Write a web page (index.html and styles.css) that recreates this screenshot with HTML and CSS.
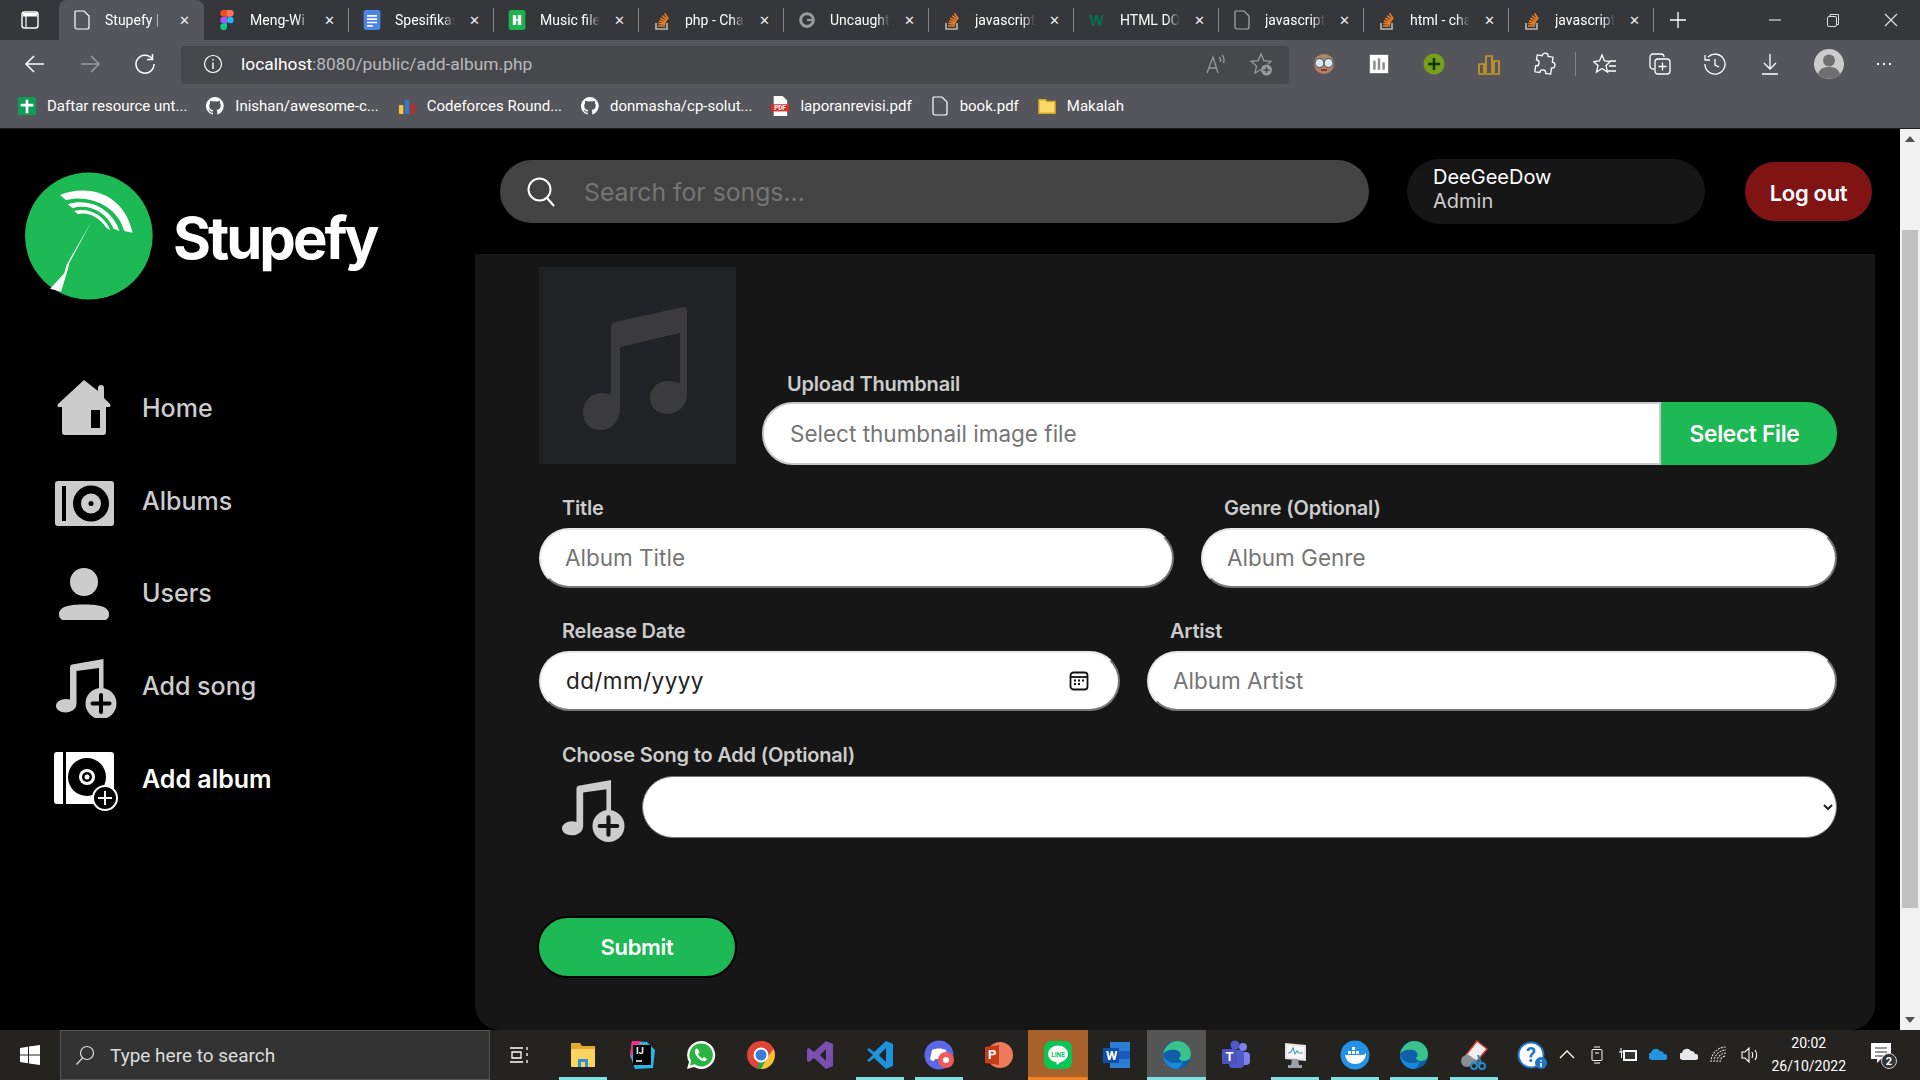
FILE: index.html
```html
<!DOCTYPE html>
<html lang="en">
<head>
<meta charset="utf-8">
<title>Stupefy | Add album</title>
<link rel="stylesheet" href="styles.css">
</head>
<body>
<svg class="defs" width="0" height="0" aria-hidden="true">
  <symbol id="doc" viewBox="0 0 16 20"><path d="M2 1h8l5 5v11a2 2 0 0 1-2 2H3a2 2 0 0 1-2-2V2a1 1 0 0 1 1-1z" fill="none" stroke="currentColor" stroke-width="1.2"/></symbol>
  <symbol id="so" viewBox="0 0 16 20"><path d="M2 13v6h11v-6" fill="none" stroke="#bcbbbb" stroke-width="1.6"/><path d="M4 16h7M4.3 13.5l7 .6M5 11l6.7 1.6M6.3 8.3l6.2 3M8.200 5.600l5.200 4.400M10.600 3.400l3.600 5.600" stroke="#f48024" stroke-width="1.6"/></symbol>
  <symbol id="gh" viewBox="0 0 16 16"><path fill="#fff" d="M8 0a8 8 0 0 0-2.500 15.600c.4.100.5-.2.500-.4v-1.400c-2.200.5-2.700-1-2.700-1-.4-.9-.9-1.200-.9-1.200-.7-.5.100-.5.100-.5.800.100 1.200.8 1.200.8.700 1.200 1.900.9 2.300.7.100-.5.300-.9.500-1.100-1.800-.2-3.600-.9-3.600-4 0-.9.300-1.600.8-2.100-.1-.2-.4-1 .1-2.100 0 0 .7-.2 2.200.8a7.600 7.600 0 0 1 4 0c1.500-1 2.200-.8 2.200-.8.400 1.100.2 1.900.1 2.100.5.600.8 1.300.8 2.100 0 3.100-1.900 3.700-3.700 3.900.3.300.6.800.6 1.500v2.200c0 .2.100.5.500.4A8 8 0 0 0 8 0z"/></symbol>
  <symbol id="note-plus" viewBox="0 0 61 59"><path fill="currentColor" d="M16 5.500 47.500 0v29.500a20 20 0 0 0-4.500 1.700V9L20.500 12v32.500c0 5.500-5 9-11 9C4 53.500 0 50.500 0 47c0-4 4.500-7 10-7 1.200 0 2.500.2 4 .6V8a3 3 0 0 1 2-2.500z"/><circle cx="45" cy="44.500" r="15.500" fill="currentColor"/><path d="M45 36v17M36.500 44.500h17" stroke="var(--cut)" stroke-width="4" stroke-linecap="round"/></symbol>
  <symbol id="edge" viewBox="0 0 30 30">
    <circle cx="15" cy="15" r="14" fill="#0f5ea8"/>
    <path d="M1 14C3 5 10 1 15 1c8 0 14 6 14 13 0 5-3 7-7 7-3 0-5-1-5-3 3-2 2-7-3-8-6-1-11 1-13 4z" fill="#38c28e"/>
    <path d="M15 29C8 29 1 23 1 14c1 5 6 9 11 9 4 0 7-1 9-2-1 4-4 8-6 8z" fill="#1888d8"/>
  </symbol>
</svg>

<header class="chrome">
  <div class="tabstrip">
    <div class="strip-lead"><svg class="ic20" viewBox="0 0 20 20"><rect x="2" y="2" width="16" height="16" rx="2.500" fill="none" stroke="#fff" stroke-width="1.400"/><rect x="3" y="3" width="14" height="3.500" fill="#fff"/><path d="M6 6v11" stroke="#fff" stroke-width="1.200"/></svg></div>
    <div class="tab active"><svg class="fav" style="color:#fff"><use href="#doc"/></svg><span class="tab-title">Stupefy | </span><span class="tab-x">✕</span></div>
    <div class="tab"><svg class="fav" viewBox="0 0 16 24"><path fill="#f24e1e" d="M4 0h4v8H4a4 4 0 0 1 0-8z"/><path fill="#ff7262" d="M8 0h4a4 4 0 0 1 0 8H8z"/><path fill="#a259ff" d="M4 8h4v8H4a4 4 0 0 1 0-8z"/><circle cx="12" cy="12" r="4" fill="#1abcfe"/><path fill="#0acf83" d="M4 16h4v4a4 4 0 1 1-4-4z"/></svg><span class="tab-title">Meng-Wi</span><span class="tab-x">✕</span></div>
    <div class="tab"><svg class="fav" viewBox="0 0 20 24"><rect width="20" height="24" rx="3" fill="#4a86e8"/><path d="M4 7h12M4 11h12M4 15h12M4 19h7" stroke="#fff" stroke-width="2"/></svg><span class="tab-title">Spesifikas</span><span class="tab-x">✕</span></div>
    <div class="tab"><svg class="fav" viewBox="0 0 20 24"><rect width="20" height="24" rx="3" fill="#1db24b"/><path d="M5 6h4v5h2V6h4v12h-4v-5H9v5H5z" fill="#fff"/></svg><span class="tab-title">Music file</span><span class="tab-x">✕</span></div>
    <div class="tab"><svg class="fav"><use href="#so"/></svg><span class="tab-title">php - Cha</span><span class="tab-x">✕</span></div>
    <div class="tab"><svg class="fav" viewBox="0 0 24 24"><circle cx="12" cy="12" r="8.500" fill="none" stroke="#9a9a9a" stroke-width="4"/><path d="M12 10.500h9v3h-9z" fill="#9a9a9a"/></svg><span class="tab-title">Uncaught</span><span class="tab-x">✕</span></div>
    <div class="tab"><svg class="fav"><use href="#so"/></svg><span class="tab-title">javascript</span><span class="tab-x">✕</span></div>
    <div class="tab"><svg class="fav" viewBox="0 0 24 24"><path fill="#04714f" d="M1 5h4l2 11 3-11h3l3 11 2-11h3l-4 15h-3l-3-10-3 10H6z"/></svg><span class="tab-title">HTML DO</span><span class="tab-x">✕</span></div>
    <div class="tab"><svg class="fav" style="color:#aaa"><use href="#doc"/></svg><span class="tab-title">javascript</span><span class="tab-x">✕</span></div>
    <div class="tab"><svg class="fav"><use href="#so"/></svg><span class="tab-title">html - cha</span><span class="tab-x">✕</span></div>
    <div class="tab"><svg class="fav"><use href="#so"/></svg><span class="tab-title">javascript</span><span class="tab-x">✕</span></div>
    <div class="tab-new"><svg class="ic20" viewBox="0 0 20 20"><path d="M10 2v16M2 10h16" stroke="#fff" stroke-width="1.300"/></svg></div>
    <div class="win-controls">
      <svg class="ic14" viewBox="0 0 14 14"><path d="M1 7h12" stroke="#ddd" stroke-width="1.200"/></svg>
      <svg class="ic14" viewBox="0 0 14 14"><rect x="1.500" y="3.500" width="9" height="10" rx="1.500" fill="none" stroke="#ddd"/><path d="M4 3.500V1.500h8.500v10h-2" fill="none" stroke="#ddd"/></svg>
      <svg class="ic14" viewBox="0 0 14 14"><path d="M1 1l12 12M13 1 1 13" stroke="#ddd" stroke-width="1.200"/></svg>
    </div>
  </div>

  <div class="toolbar">
    <div class="nav-btns">
      <svg class="ic24" viewBox="0 0 24 24"><path d="M21 12H3M11 4l-8 8 8 8" fill="none" stroke="#fff" stroke-width="1.500"/></svg>
      <svg class="ic24" viewBox="0 0 24 24"><path d="M3 12h18M13 4l8 8-8 8" fill="none" stroke="#98999b" stroke-width="1.500"/></svg>
      <svg class="ic24" viewBox="0 0 24 24"><path d="M19 6.500A9 9 0 1 0 21 12" fill="none" stroke="#fff" stroke-width="1.500"/><path d="M19.500 2v5.500H14" fill="none" stroke="#fff" stroke-width="1.500"/></svg>
    </div>
    <div class="address">
      <svg class="ic20" viewBox="0 0 20 20"><circle cx="10" cy="10" r="8.500" fill="none" stroke="#fff" stroke-width="1.200"/><path d="M10 8.500V15M10 5v1.600" stroke="#fff" stroke-width="1.400"/></svg>
      <span class="url"><span class="url-host">localhost</span>:8080/public/add-album.php</span>
      <span class="addr-spacer"></span>
      <svg class="ic24" viewBox="0 0 24 24"><path d="M3 21 9 5l5 16M5 16h8M15 5c1.500 1 2 3 1.500 5M18 3c2 2 2.500 5 1.500 8" fill="none" stroke="#98999b" stroke-width="1.300"/></svg>
      <svg class="ic24 addr-star" viewBox="0 0 24 24"><path d="M12 17.500 6 21l1.500-7L2 9.300l7.200-.7L12 2l2.800 6.600 7.200.7-3 3" fill="none" stroke="#98999b" stroke-width="1.300"/><circle cx="17.500" cy="18" r="5.500" fill="#98999b"/><path d="M17.500 15v6M14.500 18h6" stroke="#47484c" stroke-width="1.300"/></svg>
    </div>
    <div class="ext-btns">
      <span class="slot"><svg class="ic24" viewBox="0 0 24 24"><circle cx="12" cy="12" r="10" fill="#b5806a"/><path d="M3 7c4-6 14-6 18 0l-2 3H5z" fill="#a88a6a"/><circle cx="7.500" cy="11" r="4.500" fill="#d8e8ee" stroke="#445" stroke-width="1"/><circle cx="16.500" cy="11" r="4.500" fill="#d8e8ee" stroke="#445" stroke-width="1"/><path d="M9 18h6" stroke="#83392a" stroke-width="2"/></svg></span>
      <span class="slot"><svg class="ic20" viewBox="0 0 24 24"><rect x="1" y="1" width="22" height="22" fill="#fff"/><path d="M5 8h3v11H5zM10.500 5h3v14h-3zM16 10h3v9h-3z" fill="#8d8d8d"/></svg></span>
      <span class="slot"><svg class="ic24" viewBox="0 0 24 24"><circle cx="12" cy="12" r="10.500" fill="#76a016"/><path d="M12 6v12M6 12h12" stroke="#16330e" stroke-width="2.600"/></svg></span>
      <span class="slot"><svg class="ic24" viewBox="0 0 24 24"><path d="M2 21V12h5v9M9 21V4h6v17M17 21V9h5v12M1 22h22" fill="none" stroke="#c89a22" stroke-width="1.700"/></svg></span>
      <span class="slot"><svg class="ic24" viewBox="0 0 24 24"><path d="M9 4a3 3 0 0 1 6 0h5v5a3 3 0 0 1 0 6v6h-5a3 3 0 0 0-6 0H4v-6a3 3 0 0 0 0-6V4z" fill="none" stroke="#fff" stroke-width="1.300" transform="rotate(8 12 12)"/></svg></span>
      <span class="tool-sep"></span>
      <span class="slot"><svg class="ic24" viewBox="0 0 24 24"><path d="M9 3l2.500 6 6 .5-4.500 4 1.500 6.500L9 16.500 3.500 20 5 13.500.5 9.500l6-.5z" fill="none" stroke="#fff" stroke-width="1.300"/><path d="M17 9h6M16 14h7M15 19h8" stroke="#fff" stroke-width="1.300"/></svg></span>
      <span class="slot"><svg class="ic24" viewBox="0 0 24 24"><path d="M6 17H5a3 3 0 0 1-3-3V5a3 3 0 0 1 3-3h8a3 3 0 0 1 3 3" fill="none" stroke="#fff" stroke-width="1.300"/><rect x="7" y="7" width="15" height="15" rx="3" fill="none" stroke="#fff" stroke-width="1.300"/><path d="M14.500 10.500v8M10.500 14.500h8" stroke="#fff" stroke-width="1.300"/></svg></span>
      <span class="slot"><svg class="ic24" viewBox="0 0 24 24"><path d="M5 5a10 10 0 1 1-3 7M2 3v5h5M12 7v6l4 2" fill="none" stroke="#fff" stroke-width="1.300"/></svg></span>
      <span class="slot"><svg class="ic24" viewBox="0 0 24 24"><path d="M12 2v15M6 11l6 6 6-6M4 22h16" fill="none" stroke="#fff" stroke-width="1.300"/></svg></span>
      <span class="slot slot-avatar"><svg class="avatar" viewBox="0 0 30 30"><circle cx="15" cy="15" r="15" fill="#ccc"/><circle cx="15" cy="11.500" r="6" fill="#6f6f6f"/><path d="M4 25c2-6 6-7 11-7s9 1 11 7a15 15 0 0 1-22 0z" fill="#6f6f6f"/></svg></span>
      <span class="slot"><svg class="ic24" viewBox="0 0 24 24"><path d="M5 12h2M11 12h2M17 12h2" stroke="#fff" stroke-width="2"/></svg></span>
    </div>
  </div>

  <div class="bookmarks">
    <span class="bm"><svg class="fav" viewBox="0 0 20 20"><rect width="20" height="20" rx="2" fill="#0f9d58"/><path d="M8.500 3h3v4.500H17v3h-5.500V18h-3v-7.500H3v-3h5.500z" fill="#fff"/></svg>Daftar resource unt...</span>
    <span class="bm"><svg class="fav"><use href="#gh"/></svg>Inishan/awesome-c...</span>
    <span class="bm"><svg class="fav" viewBox="0 0 20 20"><rect x="1" y="9" width="5" height="10" rx="1" fill="#f6c43d"/><rect x="7.500" y="3" width="5" height="16" rx="1" fill="#3b78c2"/><rect x="14" y="7" width="5" height="12" rx="1" fill="#b5302a"/></svg>Codeforces Round...</span>
    <span class="bm"><svg class="fav"><use href="#gh"/></svg>donmasha/cp-solut...</span>
    <span class="bm"><svg class="fav" viewBox="0 0 20 22"><path d="M3 0h10l5 5v17H3z" fill="#fff"/><rect x="0" y="9" width="20" height="8" fill="#d8312b"/><text x="10" y="15.500" class="pdf-tag">PDF</text></svg>laporanrevisi.pdf</span>
    <span class="bm"><svg class="fav" style="color:#fff"><use href="#doc"/></svg>book.pdf</span>
    <span class="bm"><svg class="fav" viewBox="0 0 20 20"><path d="M1 3h7l2 2h9v13H1z" fill="#fbd968" stroke="#d8a723" stroke-width="1.500"/></svg>Makalah</span>
  </div>
</header>

<div class="page">
  <aside class="sidebar">
    <div class="brand">
      <svg class="logo" viewBox="75 130 383 380">
        <ellipse cx="266" cy="320" rx="191" ry="190" fill="#1db954"/>
        <path fill="#fff" d="M180 197C255 165 370 185 397 310L372 305C350 225 260 195 198 213Z"/>
        <path fill="#fff" d="M203 225C270 205 335 240 358 305L340 298C318 245 262 222 218 237Z"/>
        <path fill="#fff" d="M222 245C265 235 310 255 331 303L318 295C295 262 262 247 234 255Z"/>
        <path fill="#fff" d="M275 275 207 402 203 420 183 487 150 478 192 432 200 405Z"/>
      </svg>
      <span class="brand-name">Stupefy</span>
    </div>
    <nav class="nav">
      <a class="nav-item">
        <span class="nav-icon"><svg class="i-home" viewBox="0 0 54 55"><path fill="#ccc" d="M27 0 41 11V8a3 3 0 0 1 6 0v10l6 6c1 1 .5 3-1 3h-3v25a3 3 0 0 1-3 3H8a3 3 0 0 1-3-3V27H2c-1.500 0-2-2-1-3z"/><rect x="34" y="30" width="9" height="18" fill="#000"/></svg></span>
        <span class="nav-text">Home</span>
      </a>
      <a class="nav-item">
        <span class="nav-icon"><svg class="i-album" viewBox="0 0 59 45"><rect width="59" height="45" rx="3" fill="#ccc"/><rect x="7" y="5" width="4" height="35" fill="#000"/><circle cx="36" cy="22.500" r="18" fill="#000"/><circle cx="36" cy="22.500" r="10" fill="#ccc"/><circle cx="36" cy="22.500" r="2.500" fill="#000"/></svg></span>
        <span class="nav-text">Albums</span>
      </a>
      <a class="nav-item">
        <span class="nav-icon"><svg class="i-user" viewBox="0 0 50 52"><circle cx="25" cy="14" r="14" fill="#ccc"/><path fill="#ccc" d="M0 46c0-8 12-9.500 25-9.500S50 38 50 46c0 4-2 6-5 6H5c-3 0-5-2-5-6z"/></svg></span>
        <span class="nav-text">Users</span>
      </a>
      <a class="nav-item">
        <span class="nav-icon"><svg class="i-song"><use href="#note-plus"/></svg></span>
        <span class="nav-text">Add song</span>
      </a>
      <a class="nav-item current">
        <span class="nav-icon"><svg class="i-addalbum" viewBox="0 0 64 59"><path fill="#fff" d="M3 0h6v52H3a3 3 0 0 1-3-3V3a3 3 0 0 1 3-3zM12 0h45a3 3 0 0 1 3 3v49H12z"/><circle cx="33" cy="25" r="19" fill="#000"/><circle cx="33" cy="25" r="8" fill="#fff"/><circle cx="33" cy="25" r="5" fill="#000"/><circle cx="33" cy="25" r="2.500" fill="#fff"/><circle cx="51" cy="46" r="12" fill="#000" stroke="#fff" stroke-width="2"/><path d="M51 39v14M44 46h14" stroke="#fff" stroke-width="2"/></svg></span>
        <span class="nav-text">Add album</span>
      </a>
    </nav>
  </aside>

  <main class="content">
    <div class="topbar">
      <label class="search">
        <svg class="search-ic" viewBox="0 0 30 32"><circle cx="13.500" cy="13.500" r="11" fill="none" stroke="#fff" stroke-width="2"/><path d="M21 22l7 8" stroke="#fff" stroke-width="2"/></svg>
        <input class="search-input" type="text" placeholder="Search for songs...">
      </label>
      <div class="user-pill">
        <span class="user-name">DeeGeeDow</span>
        <span class="user-role">Admin</span>
      </div>
      <button class="logout" type="button">Log out</button>
    </div>

    <form class="panel">
      <div class="row-thumb">
        <div class="thumb">
          <svg class="thumb-note" viewBox="0 0 197 197"><path fill="#3b3b3d" d="M72 60q0-4 4-5l68-15q4-.5 4 3.500V128c0 10-9 19-19 19s-18-6-18-16 8-17 18-17c3 0 6 .5 12 2.500V66L81 80v62c0 11-8 21-19 21s-18-7-18-18 9-19 19-19c3 0 6 .5 9 1.500z"/></svg>
        </div>
        <div class="upload">
          <span class="label label-upload">Upload Thumbnail</span>
          <div class="file-group">
            <input class="field file-field" type="text" placeholder="Select thumbnail image file">
            <button class="file-btn" type="button">Select File</button>
          </div>
        </div>
      </div>

      <div class="row row-half">
        <div class="group">
          <span class="label">Title</span>
          <input class="field" type="text" placeholder="Album Title">
        </div>
        <div class="group">
          <span class="label">Genre (Optional)</span>
          <input class="field" type="text" placeholder="Album Genre">
        </div>
      </div>

      <div class="row row-date">
        <div class="group">
          <span class="label">Release Date</span>
          <div class="date-field">
            <input class="date-input" type="text" value="dd/mm/yyyy">
            <svg class="cal" viewBox="0 0 20 20"><rect x="1.500" y="1.500" width="17" height="17" rx="3" fill="none" stroke="#111" stroke-width="1.800"/><path d="M1.500 6h17" stroke="#111" stroke-width="1.800"/><path d="M5 9.500h2M9 9.500h2M13 9.500h2M5 13h2M9 13h2" stroke="#111" stroke-width="1.800"/></svg>
          </div>
        </div>
        <div class="group">
          <span class="label">Artist</span>
          <input class="field" type="text" placeholder="Album Artist">
        </div>
      </div>

      <div class="row-song">
        <span class="label">Choose Song to Add (Optional)</span>
        <div class="song-line">
          <svg class="song-ic"><use href="#note-plus"/></svg>
          <select class="song-select"><option></option></select>
        </div>
      </div>

      <button class="submit" type="button">Submit</button>
    </form>
  </main>

  <div class="scrollbar">
    <span class="sb-btn"><svg class="sb-arrow" viewBox="0 0 10 6"><path d="M5 0l5 6H0z" fill="#505050"/></svg></span>
    <span class="sb-gap"></span>
    <span class="sb-thumb"></span>
    <span class="sb-rest"></span>
    <span class="sb-btn"><svg class="sb-arrow" viewBox="0 0 10 6"><path d="M0 0h10L5 6z" fill="#505050"/></svg></span>
  </div>
</div>

<footer class="taskbar">
  <span class="start"><svg class="ic20" viewBox="0 0 20 20"><path fill="#fff" d="M0 3l8-1.200V9.500H0zM9 1.600 20 0v9.500H9zM0 10.500h8v7.700L0 17zM9 10.500h11V20L9 18.400z"/></svg></span>
  <div class="task-search">
    <svg class="ic20" viewBox="0 0 20 20"><circle cx="12" cy="8" r="6.500" fill="none" stroke="#ddd" stroke-width="1.200"/><path d="M7.500 13 1.500 19.500" stroke="#ddd" stroke-width="1.200"/></svg>
    <span>Type here to search</span>
  </div>
  <div class="task-icons">
    <span class="ti ti-first"><svg class="ic20" viewBox="0 0 20 20"><path d="M1 3h13M1 17h13M3 7h9v6H3zM18 2v3M18 8v3M18 15v3" fill="none" stroke="#fff" stroke-width="1.300"/></svg></span>
    <span class="ti on"><svg class="ic30" viewBox="0 0 30 30"><path d="M3 3h9l2 3h13v6H3z" fill="#e3a92a"/><rect x="3" y="9" width="24" height="18" rx="1" fill="#fbd35f"/><path d="M10 27v-8h10v8h-3v-5h-4v5z" fill="#2f8fdc"/></svg></span>
    <span class="ti"><svg class="ic30" viewBox="0 0 30 30"><path d="M5 1 20 2l8 8-2 18-18 1-5-14z" fill="#28b8e8"/><path d="M5 1 14 1 3 18z" fill="#fb2a8a"/><path d="M14 3 24 8l-6 6z" fill="#f97a1f"/><rect x="6" y="5" width="18" height="20" fill="#000"/><text x="9" y="14" class="ij-tag">IJ</text><path d="M9 21h6" stroke="#fff" stroke-width="1.500"/></svg></span>
    <span class="ti"><svg class="ic30" viewBox="0 0 30 30"><path d="M15 1a14 14 0 0 0-12 21L1 29l7-2A14 14 0 1 0 15 1z" fill="#fff"/><path d="M15 3.500a11.500 11.500 0 0 0-9.800 17.600L4 25.500l4.600-1.200A11.500 11.500 0 1 0 15 3.500z" fill="#29b43f"/><path d="M10.500 8.500c-1 .6-2 2-1.500 4 .8 3.500 4.500 7.500 8 8.500 2 .5 3.500-.5 4-2l-3-2-1.500 1.500c-2-.8-3.500-2.500-4.500-4.500l1.500-1.500-1.500-3.500z" fill="#fff"/></svg></span>
    <span class="ti"><svg class="ic30" viewBox="0 0 30 30"><circle cx="15" cy="15" r="14" fill="#de4437"/><path d="M15 15 27 22a14 14 0 0 1-16 6.500z" fill="#2ba24c"/><path d="M15 1a14 14 0 0 1 12.500 8H15z" fill="#de4437"/><path d="M27.500 9A14 14 0 0 1 15 29l6-11z" fill="#fbc02d"/><circle cx="15" cy="15" r="6.500" fill="#3b7bdb" stroke="#fff" stroke-width="2"/></svg></span>
    <span class="ti"><svg class="ic30" viewBox="0 0 30 30"><path d="M21 1l7 3v22l-7 3L9 18l-5 4-2-1V9l2-1 5 4zM21 9l-6 6 6 6z" fill="#7a4fb0"/></svg></span>
    <span class="ti on"><svg class="ic30" viewBox="0 0 30 30"><path d="M21 1l7 3v22l-7 3L9 18l-5 4-2-1.500L8 15 2 9.500 4 8l5 4zM21 8l-7 7 7 7z" fill="#1e92dc"/></svg></span>
    <span class="ti on"><svg class="ic30" viewBox="0 0 30 30"><circle cx="15" cy="15" r="14.500" fill="#5b68e8"/><path d="M8 10c4-2 10-2 14 0l2 9c-1 1.500-3 2-4 2l-1-2H11l-1 2c-1 0-3-.5-4-2z" fill="#fff"/><circle cx="22" cy="20" r="8" fill="#ef5a5a"/><circle cx="22" cy="20" r="3" fill="#fff"/></svg></span>
    <span class="ti"><svg class="ic30" viewBox="0 0 30 30"><circle cx="17" cy="15" r="13" fill="#ee7a5c"/><path d="M2 7l14-2v20L2 23z" fill="#c43e1c"/><text x="5" y="19" class="office-tag">P</text></svg></span>
    <span class="ti ti-line"><svg class="ic30" viewBox="0 0 30 30"><rect x="1" y="1" width="28" height="28" rx="7" fill="#06c755"/><ellipse cx="15" cy="14" rx="10" ry="8.500" fill="#fff"/><text x="15" y="16.500" class="line-tag">LINE</text><path d="M13 21l1 4 5-4z" fill="#fff"/></svg></span>
    <span class="ti"><svg class="ic30" viewBox="0 0 30 30"><path d="M8 2h20v26H8z" fill="#2b7cd3"/><path d="M8 11h20v8H8z" fill="#185abd"/><path d="M1 8h16v15H1z" fill="#124fa8"/><text x="4" y="19.500" class="office-tag">W</text></svg></span>
    <span class="ti ti-active"><svg class="ic30"><use href="#edge"/></svg></span>
    <span class="ti"><svg class="ic30" viewBox="0 0 30 30"><circle cx="22" cy="7" r="4" fill="#7b83eb"/><rect x="18" y="12" width="11" height="13" rx="4" fill="#7b83eb"/><circle cx="14" cy="5" r="4.500" fill="#5059c9"/><rect x="8" y="10" width="15" height="18" rx="4" fill="#5059c9"/><rect x="1" y="9" width="15" height="15" rx="1.500" fill="#4b53bc"/><text x="4.500" y="21" class="office-tag">T</text></svg></span>
    <span class="ti on"><svg class="ic30" viewBox="0 0 30 30"><path d="M5 3l21 2v16L5 19z" fill="#e4e4e4"/><path d="M7 5l17 2v12L7 17z" fill="#f8f8f8"/><path d="M8 13l3-1 2-4 2 6 2-3 2 2h4" fill="none" stroke="#4a9cc9" stroke-width="1.200"/><path d="M12 19h6l1 6h-8zM8 25h14v3H8z" fill="#9aa0a6"/></svg></span>
    <span class="ti on"><svg class="ic30" viewBox="0 0 30 30"><circle cx="15" cy="15" r="14.500" fill="#2391e6"/><path d="M5 15h17c2 0 3-1 4-2 0 6-4 11-11 11-6 0-9-4-10-9z" fill="#fff"/><path d="M8 11h3v3H8zM12 11h3v3h-3zM16 11h3v3h-3zM12 7h3v3h-3z" fill="#fff"/></svg></span>
    <span class="ti on"><svg class="ic30"><use href="#edge"/></svg></span>
    <span class="ti on"><svg class="ic30" viewBox="0 0 30 30"><path d="M18 1 28 9 17 22 7 15z" fill="#eee" stroke="#dc3c3c" stroke-width="1.500"/><path d="M7 15l10 7" stroke="#999" stroke-width="3"/><circle cx="8" cy="21" r="6" fill="#8a8f94"/><path d="M19 15l3 8M15 20l7 4" stroke="#2a8ac6" stroke-width="2"/><circle cx="23" cy="26" r="3" fill="none" stroke="#2a8ac6" stroke-width="2"/><circle cx="15" cy="26" r="3" fill="none" stroke="#2a8ac6" stroke-width="2"/></svg></span>
  </div>
  <div class="tray">
    <span class="tr tr-help"><svg class="ic30" viewBox="0 0 30 30"><circle cx="14" cy="15" r="12.500" fill="#fff" stroke="#1f76c8" stroke-width="2"/><text x="14" y="22" class="help-tag">?</text><circle cx="24" cy="23" r="6" fill="#1f76c8"/><path d="M24 20v1.500M24 23v4" stroke="#fff" stroke-width="1.600"/></svg></span>
    <span class="tr"><svg class="ic18" viewBox="0 0 18 18"><path d="M2 12l7-7 7 7" fill="none" stroke="#fff" stroke-width="1.300"/></svg></span>
    <span class="tr"><svg class="ic18" viewBox="0 0 18 18"><rect x="4" y="3.500" width="10" height="11" rx="1" fill="none" stroke="#fff"/><path d="M6 1h6M6 17h6M7 7h4" stroke="#fff"/></svg></span>
    <span class="tr"><svg class="ic18" viewBox="0 0 18 18"><rect x="4" y="4" width="14" height="11" fill="#fff"/><rect x="6" y="6" width="10" height="7" fill="#333"/><path d="M0 6h5M2 2v4M2.500 6v6" stroke="#fff"/></svg></span>
    <span class="tr"><svg class="ic18" viewBox="0 0 18 18"><path d="M1 13a3 3 0 0 1 1-6 5 5 0 0 1 9-2 4 4 0 0 1 4 3 3 3 0 0 1 1 6H2z" fill="#2493e0"/></svg></span>
    <span class="tr"><svg class="ic18" viewBox="0 0 18 18"><path d="M1 13a3 3 0 0 1 1-6 5 5 0 0 1 9-2 4 4 0 0 1 4 3 3 3 0 0 1 1 6H2z" fill="#e8e8e8"/></svg></span>
    <span class="tr"><svg class="ic18" viewBox="0 0 18 18"><path d="M1 16a15 15 0 0 1 15-15M4 16A12 12 0 0 1 16 4M7 16a9 9 0 0 1 9-9M10 16a6 6 0 0 1 6-6" fill="none" stroke="#ddd" stroke-width="1.100" stroke-dasharray="2 1"/></svg></span>
    <span class="tr"><svg class="ic18" viewBox="0 0 18 18"><path d="M1 6h3l4-4v14l-4-4H1zM11 6c1 2 1 4 0 6M14 4c2 3 2 7 0 10" fill="none" stroke="#fff" stroke-width="1.100"/></svg></span>
  </div>
  <div class="clock"><span>20:02</span><span>26/10/2022</span></div>
  <span class="notif"><svg class="ic30" viewBox="0 0 30 30"><path d="M3 3h20v16h-10l-4 4v-4H3z" fill="#fff"/><path d="M7 8h12M7 12h12M7 16h8" stroke="#333" stroke-width="1.200"/><circle cx="21" cy="21" r="7.500" fill="#333" stroke="#ccc"/><text x="21" y="25" class="notif-tag">2</text></svg></span>
</footer>
</body>
</html>
```

FILE: styles.css
```css
* { box-sizing: border-box; }
html, body { margin: 0; height: 100%; overflow: hidden; }
body {
  display: flex;
  flex-direction: column;
  width: 1920px;
  height: 1080px;
  background: #000;
  font-family: Inter, "Noto Sans", sans-serif;
}
.defs { display: block; height: 0; width: 0; overflow: hidden; flex: none; }
.ic14 { width: 14px; height: 14px; flex: none; }
.ic18 { width: 18px; height: 18px; flex: none; }
.ic20 { width: 20px; height: 20px; flex: none; }
.ic24 { width: 24px; height: 24px; flex: none; }
.ic30 { width: 30px; height: 30px; flex: none; }

/* browser chrome */
.chrome { flex: none; height: 129px; background: #55565b; border-bottom: 1px solid #1c1c1c; color: #fff; font-family: Roboto, sans-serif; }
.tabstrip { display: flex; height: 40px; background: #36373b; }
.strip-lead { width: 59px; display: flex; align-items: center; justify-content: center; padding-left: 1px; }
.tab {
  width: 145px; height: 40px; flex: none; display: flex; align-items: center;
  padding: 0 14px; gap: 14px; font-size: 14px;
}
.tab::after { content: ""; width: 1px; height: 24px; background: #84858a; flex: none; margin-right: -14px; margin-left: -2px; }
.tab.active { background: #55565b; border-radius: 8px 8px 0 0; }
.tab.active::after { background: transparent; }
.fav { width: 18px; height: 20px; flex: none; }
.tab-title {
  width: 60px; flex: none; white-space: nowrap; overflow: hidden;
  -webkit-mask-image: linear-gradient(90deg, #000 78%, transparent 100%);
  mask-image: linear-gradient(90deg, #000 78%, transparent 100%);
}
.tab-x { font-size: 13px; width: 14px; margin-left: -2px; text-align: center; flex: none; color: #eee; }
.tab-new { width: 42px; display: flex; align-items: center; justify-content: center; padding-left: 6px; }
.win-controls { flex: 1; display: flex; align-items: center; justify-content: flex-end; gap: 44px; padding-right: 22px; }

.toolbar { display: flex; height: 45px; align-items: center; padding-top: 2px; }
.nav-btns { width: 181px; display: flex; align-items: center; gap: 31px; padding-left: 23px; flex: none; }
.address {
  width: 1108px; height: 38px; flex: none; background: #47484c; border-radius: 4px;
  display: flex; align-items: center; padding: 0 16px 2px 22px; margin-top: 3px;
}
.url { margin-left: 18px; font-size: 17.400px; color: #b9babc; white-space: nowrap; }
.url-host { color: #fff; }
.addr-spacer { flex: 1; }
.addr-star { margin-left: 21px; }
.ext-btns { display: flex; align-items: center; padding-left: 7px; }
.slot { width: 55px; display: flex; justify-content: center; align-items: center; flex: none; }
.slot-avatar { margin-left: 4px; }
.tool-sep { width: 1px; height: 24px; background: #84858a; margin: 0 1px 0 4px; }
.avatar { width: 30px; height: 30px; }

.bookmarks { display: flex; height: 43px; align-items: center; padding: 0 0 2px 18px; gap: 19px; font-size: 15px; }
.bm { display: flex; align-items: center; gap: 11px; white-space: nowrap; }
.pdf-tag { font: 700 7px Roboto, sans-serif; fill: #fff; text-anchor: middle; }

/* page */
.page { flex: 1; min-height: 0; display: flex; background: #000; }
.sidebar { width: 475px; flex: none; padding: 43px 0 0 25px; color: #ccc; }
.brand { display: flex; align-items: center; gap: 20px; }
.logo { width: 128px; height: 128px; flex: none; }
.brand-name { font-weight: 700; font-size: 58px; letter-spacing: -3px; color: #fff; padding-top: 3px; }
.nav { display: flex; flex-direction: column; margin-top: 62px; margin-left: 29px; }
.nav-item { display: flex; align-items: center; height: 93px; gap: 28px; font-size: 25px; font-weight: 500; }
.nav-item:nth-child(n+3) { padding-bottom: 2px; }
.nav-text { margin-top: -2px; }
.nav-item.current { color: #fff; font-weight: 600; }
.nav-icon { width: 60px; display: flex; justify-content: center; align-items: center; flex: none; }
.i-home { width: 54px; height: 55px; margin-bottom: 2px; }
.i-album { width: 59px; height: 45px; margin-top: 3px; }
.i-user { width: 50px; height: 52px; }
.i-song { width: 61px; height: 59px; color: #ccc; --cut: #000; flex: none; margin: 4px 0 0 4px; }
.i-addalbum { width: 64px; height: 59px; flex: none; margin: 4px 0 0 4px; }

.content { width: 1425px; flex: none; display: flex; flex-direction: column; }
.topbar { height: 125px; flex: none; display: flex; align-items: center; padding-left: 25px; }
.search {
  width: 869px; height: 63px; background: #434343; border-radius: 32px;
  display: flex; align-items: center; padding-left: 26px; gap: 26px;
}
.search-ic { width: 30px; height: 32px; flex: none; }
.search-input {
  flex: 1; min-width: 0; background: none; border: 0; outline: 0; color: #fff;
  font: 400 24.750px Inter, sans-serif;
}
.search-input::placeholder { color: #757575; opacity: 1; }
.user-pill {
  width: 298px; height: 65px; margin-left: 38px; background: #161616; border-radius: 33px;
  display: flex; flex-direction: column; justify-content: center; padding: 0 0 6px 26px;
  font-size: 20px; line-height: 24px;
}
.user-name { color: #fff; }
.user-role { color: #ccc; }
.logout {
  width: 127px; height: 59px; margin-left: 40px; background: #801414; border: 0; border-radius: 30px;
  color: #fff; font: 600 22px Inter, sans-serif; letter-spacing: -.3px; padding-top: 4px;
}

.panel {
  flex: 1; min-height: 0; width: 1400px; background: #161616;
  border-radius: 0 0 25px 25px; padding: 12px 38px 0 64px;
  display: flex; flex-direction: column;
}
.row-thumb { display: flex; align-items: flex-end; gap: 26px; height: 199px; flex: none; }
.thumb { width: 197px; height: 197px; background: #212226; flex: none; margin-bottom: 1px; }
.thumb-note { width: 197px; height: 197px; display: block; }
.upload { flex: 1; min-width: 0; }
.label { display: block; height: 22px; line-height: 22px; font-size: 20px; font-weight: 600; color: #ccc; margin-left: 23px; letter-spacing: -.2px; }
.label-upload { margin-bottom: 7px; margin-left: 25px; }
.file-group { display: flex; height: 63px; }
.field {
  width: 100%; height: 60px; margin-top: 9px; display: block; border-radius: 30px;
  border: 2px solid; border-color: #e8e8e8 #767676 #767676 #e8e8e8;
  background: #fff; padding: 0 24px 2px; outline: 0;
  font: 400 22.500px Inter, sans-serif; color: #222;
}
.field::placeholder { color: #757575; opacity: 1; }
.file-field {
  flex: 1; min-width: 0; height: 63px; margin: 0; border: 2px solid #c9c9c9;
  border-radius: 31px 0 0 31px; padding: 0 26px;
}
.file-btn {
  width: 176px; flex: none; border: 0; background: #1db954; color: #fff; border-radius: 0 31px 31px 0;
  font: 600 22.700px Inter, sans-serif; letter-spacing: -.3px; padding-right: 15px;
}
.row { display: grid; margin-top: 32px; flex: none; }
.row-half { grid-template-columns: 635px 636px; column-gap: 27px; }
.row-date { grid-template-columns: 581px 690px; column-gap: 27px; }
.date-field {
  height: 60px; margin-top: 9px; display: flex; align-items: center; border-radius: 30px;
  border: 2px solid; border-color: #e8e8e8 #767676 #767676 #e8e8e8;
  background: #fff; padding: 0 29px 0 25px;
}
.date-input { flex: 1; min-width: 0; border: 0; outline: 0; padding: 0 0 2px; background: none; font: 400 22.500px Inter, sans-serif; color: #222; letter-spacing: .4px; }
.cal { width: 20px; height: 20px; flex: none; }
.row-song { margin-top: 33px; flex: none; }
.song-line { display: flex; align-items: flex-start; margin-top: 10px; margin-left: 23px; }
.song-ic { width: 63px; height: 63px; color: #ccc; --cut: #161616; flex: none; margin-top: 3px; }
.song-select {
  flex: none; width: 1195px; height: 62px; margin-left: 17px; background: #fff; border: 1px solid #767676;
  border-radius: 31px; font: 400 22px Inter, sans-serif; padding: 0 8px; outline: 0; color: #222;
}
.submit {
  width: 200px; height: 62px; margin: 74px 0 0 -2px; flex: none; background: #1db954; color: #fff;
  border: 2px solid #000; border-radius: 31px; font: 600 22px Inter, sans-serif; letter-spacing: -.3px;
}

/* scrollbar */
.scrollbar { width: 20px; flex: none; background: #f1f1f1; display: flex; flex-direction: column; }
.sb-btn { height: 20px; flex: none; display: flex; align-items: center; justify-content: center; }
.sb-arrow { width: 10px; height: 6px; }
.sb-gap { height: 81px; flex: none; }
.sb-thumb { height: 678px; flex: none; margin: 0 2px; background: #c1c1c1; }
.sb-rest { flex: 1; }

/* taskbar */
.taskbar {
  flex: none; height: 50px; display: flex; align-items: stretch; color: #fff;
  background: #25231f; font-family: Roboto, sans-serif;
}
.start { width: 60px; display: flex; align-items: center; justify-content: center; flex: none; }
.task-search {
  width: 430px; flex: none; background: #333; border: 1px solid #555; display: flex; align-items: center;
  gap: 15px; padding-left: 14px; font-size: 19px; color: #ddd;
}
.task-icons { display: flex; flex: none; }
.ti { width: 59.400px; flex: none; display: flex; align-items: center; justify-content: center; }
.ti-first { width: 63px; padding-right: 5px; }
.ti-line { background: linear-gradient(#f5821f, #f5821f) bottom / 100% 3px no-repeat, #a9612c; }
.ti-active { background: linear-gradient(#7fe0e6, #7fe0e6) bottom / 100% 3px no-repeat, #555; }
.ti.on { background: linear-gradient(#7fe0e6, #7fe0e6) bottom / 48px 3px no-repeat; }
.ij-tag { font: 700 9px Roboto, sans-serif; fill: #fff; }
.office-tag { font: 700 13px Roboto, sans-serif; fill: #fff; }
.line-tag { font: 700 6.500px Roboto, sans-serif; fill: #06c755; text-anchor: middle; }
.help-tag { font: 700 20px Roboto, sans-serif; fill: #1f76c8; text-anchor: middle; }
.notif-tag { font: 700 11px Roboto, sans-serif; fill: #fff; text-anchor: middle; }
.tray { display: flex; align-items: center; flex: none; padding-left: 9px; }
.tr { width: 30.500px; display: flex; justify-content: center; flex: none; }
.tr-help { width: 39px; }
.clock { width: 92px; flex: none; display: flex; flex-direction: column; align-items: center; justify-content: center; font-size: 14px; line-height: 23px; margin-left: -2px; }
.notif { flex: 1; display: flex; align-items: center; justify-content: center; padding-right: 8px; }
```
